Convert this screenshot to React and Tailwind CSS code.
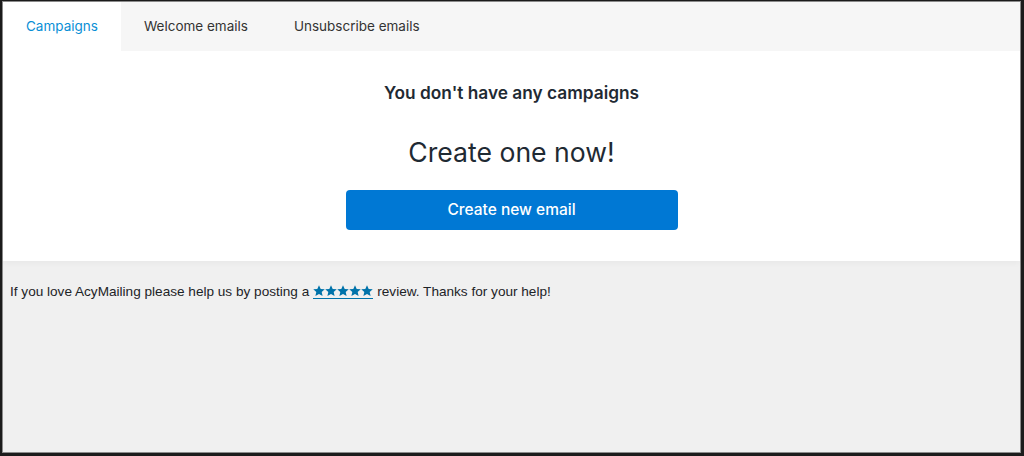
const tabs = ["Campaigns", "Welcome emails", "Unsubscribe emails"];

const Stars = () => (
  <a href="#" className="inline-flex items-center border-b border-[#0073aa] text-[#0073aa] leading-none pb-px">
    {[0, 1, 2, 3, 4].map((i) => (
      <svg key={i} viewBox="0 0 24 24" className="w-[12px] h-[12px]" fill="currentColor">
        <path d="M12 0.5l3.4 7.3 8.1.8-6.1 5.4 1.8 8L12 17.8l-7.2 4.2 1.8-8L0.5 8.6l8.1-.8z" />
      </svg>
    ))}
  </a>
);

const App = () => {
  return (
    <div className="w-[1024px] h-[456px] bg-[#1c1c1c] pt-[1px] pl-[2px] pr-[3px] pb-[3px]">
      <div className="h-full border border-[#8c8c8c] bg-[#f0f0f0] flex flex-col">
        <div className="bg-white shadow-[0_2px_6px_rgba(0,0,0,0.04)]">
          <div className="flex h-[49px] bg-[#f6f6f6] font-['Inter',sans-serif] text-[13.5px] leading-[18px]">
            {tabs.map((t, i) => (
              <div
                key={t}
                className={`flex items-center px-[23px] pb-[2px] ${
                  i === 0 ? "bg-white text-[#0a8fd6]" : "text-[#333]"
                }`}
              >
                {t}
              </div>
            ))}
          </div>
          <div className="flex flex-col items-center pt-[31px] pb-[31px] font-['Inter',sans-serif] text-[#1f2a33]">
            <h2 className="text-[17.3px] font-semibold leading-[22px]">You don't have any campaigns</h2>
            <p className="mt-[32px] text-[26.6px] leading-[32px]">Create one now!</p>
            <button className="mt-[22px] w-[332px] h-[40px] rounded-[4px] bg-[#0078d4] text-white text-[15.5px] font-medium">
              Create new email
            </button>
          </div>
        </div>
        <div className="px-[7px] pt-[21px] font-['Liberation_Sans',sans-serif] text-[13.6px] text-[#1d2327] flex items-center gap-[4px]">
          <span>If you love AcyMailing please help us by posting a</span>
          <Stars />
          <span>review. Thanks for your help!</span>
        </div>
      </div>
    </div>
  );
};

export default App;
